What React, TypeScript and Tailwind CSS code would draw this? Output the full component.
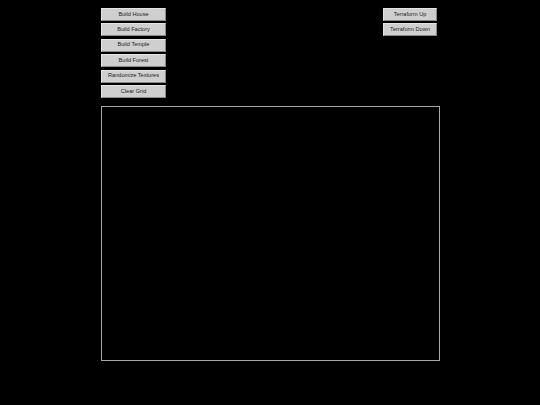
const LEFT_BUTTONS = [
  'Build House',
  'Build Factory',
  'Build Temple',
  'Build Forest',
  'Randomize Textures',
  'Clear Grid',
];

const RIGHT_BUTTONS = ['Terraform Up', 'Terraform Down'];

function ToolButton({ label, width }: { label: string; width: string }) {
  return (
    <button
      className={`${width} h-[13px] flex items-center justify-center bg-[#cfcfcf] border border-t-[#e4e4e4] border-l-[#e4e4e4] border-b-[#8a8a8a] border-r-[#8a8a8a] text-[5.6px] leading-none text-[#222]`}
      style={{ fontFamily: '"Liberation Sans", Arial, sans-serif' }}
    >
      {label}
    </button>
  );
}

export default function App() {
  return (
    <div className="w-[540px] h-[405px] bg-black overflow-hidden">
      <div className="w-[339px] ml-[101px] pt-[8px]">
        <div className="flex justify-between">
          <div className="flex flex-col gap-[2.4px]">
            {LEFT_BUTTONS.map((label) => (
              <ToolButton key={label} label={label} width="w-[65px]" />
            ))}
          </div>
          <div className="flex flex-col gap-[2.4px] mr-[3px]">
            {RIGHT_BUTTONS.map((label) => (
              <ToolButton key={label} label={label} width="w-[54px]" />
            ))}
          </div>
        </div>

        {/* game canvas */}
        <div className="mt-[8px] w-[339px] h-[255px] border border-[#a8a8a8] bg-black" />
      </div>
    </div>
  );
}
